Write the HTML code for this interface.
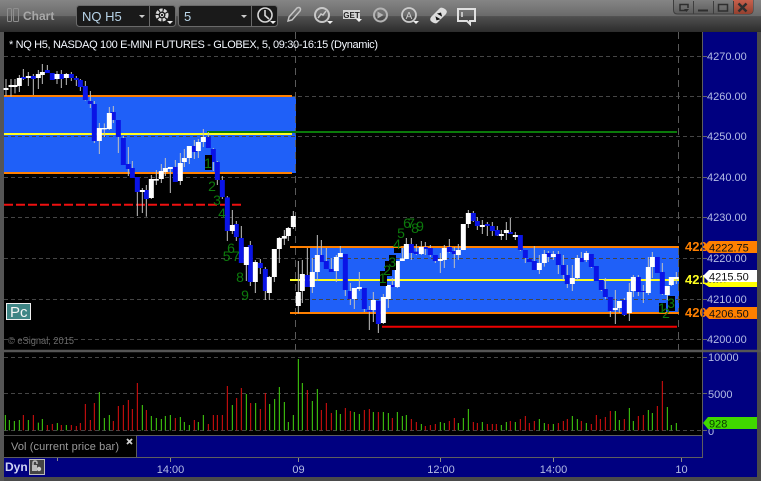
<!DOCTYPE html>
<html><head><meta charset="utf-8"><style>
html,body{margin:0;padding:0;background:#444;width:761px;height:481px;overflow:hidden}
svg{display:block}
text{font-family:"Liberation Sans",sans-serif}
</style></head><body>
<svg width="761" height="481" viewBox="0 0 761 481" xmlns="http://www.w3.org/2000/svg">
<defs>
<linearGradient id="tb" x1="0" y1="0" x2="0" y2="1"><stop offset="0" stop-color="#858585"/><stop offset=".5" stop-color="#6a6a6a"/><stop offset=".51" stop-color="#505050"/><stop offset="1" stop-color="#2c2c2c"/></linearGradient>
<linearGradient id="wb" x1="0" y1="0" x2="0" y2="1"><stop offset="0" stop-color="#7e7e7e"/><stop offset="1" stop-color="#5c5c5c"/></linearGradient>
<linearGradient id="xb" x1="0" y1="0" x2="0" y2="1"><stop offset="0" stop-color="#c8604c"/><stop offset="1" stop-color="#93402f"/></linearGradient>
</defs>
<rect width="761" height="481" fill="#4a4a4a"/>
<rect width="761" height="32" fill="url(#tb)"/>
<rect x="0" y="32" width="4" height="449" fill="#555"/>
<rect x="4" y="32" width="699" height="318" fill="#000"/>
<rect x="4" y="352" width="699" height="83" fill="#000"/>
<rect x="4" y="436" width="132" height="21" fill="#000"/>
<rect x="136" y="436" width="566" height="21" fill="#000080"/>
<rect x="4" y="458" width="699" height="19" fill="#000080"/>
<rect x="703" y="32" width="54" height="445" fill="#000080"/>

<!-- title bar -->
<g fill="none" stroke="#8e8e8e" stroke-width="1"><rect x="7.500" y="8.500" width="4" height="13" rx="1"/><rect x="13.500" y="8.500" width="5" height="13" rx="1"/></g>
<text x="23" y="20" font-size="12" font-weight="bold" fill="#a8a8a8">Chart</text>
<rect x="76.500" y="5.500" width="99" height="21" rx="3" fill="#1a1a1a" stroke="#6a6a6a"/><path d="M149.500 6V26" stroke="#6a6a6a"/>
<rect x="178.500" y="5.500" width="99" height="21" rx="3" fill="#1a1a1a" stroke="#6a6a6a"/><path d="M251.500 6V26" stroke="#6a6a6a"/>
<text x="82" y="21" font-size="13" fill="#b8d4e8">NQ H5</text>
<text x="184" y="21" font-size="13" fill="#b8d4e8">5</text>
<path d="M139 15h6l-3 3zM241 15h6l-3 3z" fill="#ccc"/>
<g fill="none" stroke="#d8d8d8">
<circle cx="162" cy="15" r="5" stroke-width="3" stroke-dasharray="3 1.200"/><circle cx="162" cy="15" r="1.600" stroke-width="1"/>
<circle cx="265" cy="15" r="7" stroke-width="1.600"/><path d="M265 10V15.500L269 19" stroke-width="1.600"/>
<path d="M288 21l1-4 8-9q2-1 3 0t0 3l-8 9z" stroke="#c4c4c4" stroke-width="1.500"/>
<circle cx="322" cy="15" r="7" stroke="#c8c8c8" stroke-width="2"/><path d="M318 18l3-4 2 1 3-4" stroke="#c8c8c8" stroke-width="1.500"/>
<circle cx="380.500" cy="15" r="6.500" stroke="#b4b4b4" stroke-width="2"/>
<circle cx="409" cy="15" r="7" stroke="#cccccc" stroke-width="1.800"/>
<path d="M458 9h17v12h-5v3l-3-3h-9z" stroke="#e0e0e0" stroke-width="2"/><path d="M462 12v5" stroke="#e0e0e0" stroke-width="1.500"/>
</g>
<path d="M167 21h6l-3 3zM270 21h6l-3 3zM327 21h6l-3 3zM356 19h6l-3 3zM413 21h6l-3 3z" fill="#eee"/>
<path d="M377.500 11.500v7l6-3.500z" fill="#b4b4b4"/>
<rect x="343" y="10" width="17" height="9" fill="#d4d4d4"/><text x="351.500" y="18" font-size="8" font-weight="bold" text-anchor="middle" fill="#222">GET</text>
<text x="409" y="19" font-size="10" text-anchor="middle" fill="#cccccc">A</text>
<path d="M431 17l9-9q2-1 5 1t1 5l-9 9q-2 1-5-1t-1-5z" fill="#ddd"/><path d="M436 15l3-3 3 3zM436 18l3 3 3-3z" fill="#111" transform="rotate(30 439 16)"/>

<path d="M673.500 0V10q0 4 4 4H749q4 0 4-4V0" fill="url(#wb)" stroke="#3e3e3e"/>
<path d="M733 0h20v10q0 4-4 4h-16z" fill="url(#xb)"/>
<path d="M693.500 1V14M713.500 1V14M733.500 1V14" stroke="#3e3e3e"/>
<g fill="none" stroke="#2e2e2e" stroke-width="1.500"><path d="M686 10.500H680V4.500H688V8"/><path d="M698 10.500h10" stroke-width="2"/><rect x="718.500" y="4.500" width="9" height="6.500"/><path d="M738.500 3.500l8 8M746.500 3.500l-8 8" stroke-width="2.500"/></g>
<path d="M684 9h5l-2.500 3z" fill="#2e2e2e"/>

<!-- zones -->
<rect x="4" y="96" width="292" height="77" fill="#1f60f8"/>
<rect x="310" y="248" width="369" height="65" fill="#1f60f8"/>
<!-- grid -->
<g stroke="#454545" stroke-dasharray="4 3" fill="none">
<path d="M4 56.500H703M4 96.500H703M4 136.500H703M4 177.500H703M4 217.500H703M4 258.500H703M4 299.500H703M4 339.500H703M4 357.500H703M4 393.500H703M4 430.500H703"/>
</g>
<path d="M295.500 32V350M678.500 32V350" stroke="#5a5a5a" stroke-dasharray="7 5"/>
<!-- lines -->
<path d="M4 96H292M4 173H292M290 247H679M290 313H679" stroke="#ff8000" stroke-width="2"/>
<path d="M4 134H292M290 280H679" stroke="#ffff20" stroke-width="2"/>
<path d="M207 132H677" stroke="#0a7a0a" stroke-width="2"/>
<path d="M4 204.700H241" stroke="#ee1010" stroke-width="2" stroke-dasharray="9 3"/>
<path d="M382 326.700H677" stroke="#ee0000" stroke-width="2"/>

<!-- candles left -->
<g transform="translate(0,60) scale(.33333)" fill="none">
<path stroke="#c0c0c0" stroke-width="3" d="M18 57V108M33 57V110M45 57V100M58 45V96M70 27V60M85 36V78M100 42V105M115 30V87M127 12V72M142 15V39M157 39V60M171 33V72M184 30V84M199 39V75M214 36V63M229 48V78M241 57V93M256 63V122M271 93V144M283 123V249M298 189V282M313 190V231M328 141V210M340 138V189M355 180V279M370 228V315M385 261V348M397 303V354M412 351V468M427 384V459M439 375V470M454 345V417M469 330V375M484 312V369M496 294V348M511 321V399M526 300V366M541 279V375M553 267V321M568 258V312M583 240V297M595 237V294M610 207V261M625 216V264M640 264V333M652 303V375M667 348V417M682 408V543M697 450V522M709 483V543M724 498V609M739 561V663M751 543V678M766 600V699M781 597V642M796 621V720M808 648V720M823 567V666M838 531V609M853 510V555M865 501V543M880 453V507"/>
<path stroke="#0a14e6" stroke-width="15" d="M70 51V57M100 48V57M142 30V39M157 39V60M184 42V57M214 42V54M229 54V60M241 60V81M256 78V120M271 123V132M283 132V243M340 156V180M355 180V231M370 234V315M385 312V327M397 324V354M412 351V396M439 390V417M526 321V366M583 258V276M625 231V264M640 267V306M652 306V360M667 360V411M682 412V513M709 492V531M724 534V609M751 555V666M781 609V624M796 627V693"/>
<path stroke="#fff" stroke-width="15" d="M18 84V90M33 75V81M45 75V81M58 54V78M85 48V54M115 42V54M127 36V45M171 42V57M199 42V54M298 204V243M313 204V208M328 159V207M427 390V396M454 357V414M469 357V362M484 333V357M496 324V336M511 321V327M541 309V363M553 294V306M568 258V294M595 246V273M610 231V246M697 495V513M739 561V615M766 606V666M808 651V699M823 567V651M838 534V567M853 528V536M865 504V528M880 468V501"/>
</g>
<!-- candles middle -->
<g transform="translate(290,200) scale(.33333)" fill="none">
<path stroke="#c0c0c0" stroke-width="3" d="M25 183V340M37 180V309M52 144V261M67 174V279M82 105V243M94 120V186M109 144V207M124 174V216M139 165V246M151 138V171M166 162V288M181 249V315M193 264V327M208 216V273M223 264V336M238 318V390M250 276V366M265 303V399M280 282V372M295 255V324M307 234V261M322 183V264M337 144V183M349 114V177M364 114V180M379 132V165M394 123V165M406 126V165M421 135V171M436 165V189M451 159V219M463 135V204M478 117V159M493 141V204M505 132V180M520 72V150M535 30V84M550 33V66M562 51V90M577 60V102M592 66V108"/>
<path stroke="#0a14e6" stroke-width="15" d="M52 225V261M94 165V186M109 183V207M124 207V216M166 162V270M181 273V297M223 264V327M238 330V335M265 303V372M307 255V261M364 132V159M379 155V162M406 141V147M421 144V165M436 165V183M478 141V156M493 153V162M550 39V63M562 63V78M592 72V78"/>
<path stroke="#fff" stroke-width="15" d="M25 276V318M37 222V273M67 216V261M82 165V216M139 171V213M151 159V171M193 264V297M208 261V267M250 300V330M280 291V369M295 255V297M322 183V261M337 175V183M349 132V177M394 141V162M451 177V183M463 144V180M505 150V165M520 72V150M535 39V72M577 75V81"/>
</g>
<!-- candles right -->
<g transform="translate(490,200) scale(.33333)" fill="none">
<path stroke="#c0c0c0" stroke-width="3" d="M7 66V108M22 78V108M34 90V120M49 66V120M61 54V102M76 96V120M91 105V153M106 150V189M118 177V186M133 138V210M148 165V222M163 150V200M175 153V186M190 153V180M205 153V222M220 165V240M232 195V264M247 195V273M262 165V240M274 156V186M289 153V186M304 162V204M319 198V243M334 240V273M346 234V297M361 291V351M376 270V372M388 303V339M403 294V348M418 249V363M430 225V291M445 225V288M460 255V309M475 171V285M487 156V234M502 171V219M517 189V285M532 258V300M544 231V258M559 216V252"/>
<path stroke="#0a14e6" stroke-width="15" d="M7 78V93M22 90V107M61 96V102M91 105V150M106 150V174M118 177V186M133 183V210M175 159V171M205 162V195M220 195V225M232 225V252M274 174V186M304 162V201M319 198V243M334 240V270M346 267V291M361 291V333M403 300V345M445 231V276M460 273V276M502 171V219M517 216V282"/>
<path stroke="#fff" stroke-width="15" d="M34 102V108M49 90V99M76 105V111M148 189V210M163 162V189M190 162V171M247 234V252M262 174V234M289 159V180M376 324V330M388 303V324M418 276V339M430 231V273M475 201V279M487 171V201M532 258V285M544 231V255M559 231V237"/>
</g>

<!-- count boxes -->
<g fill="#000"><rect x="205" y="155" width="7" height="15"/><rect x="380" y="271" width="7" height="15"/><rect x="385" y="261" width="7" height="15"/><rect x="389" y="255" width="7" height="15"/><rect x="394" y="248" width="7" height="5"/><rect x="668" y="296" width="7" height="15"/><rect x="659" y="303" width="7" height="9"/></g>
<g font-size="14" fill="#0c7a0c" text-anchor="middle">
<text x="208" y="168">1</text><text x="212" y="191">2</text><text x="217" y="205">3</text><text x="222" y="218">4</text><text x="226.700" y="261">5</text><text x="231" y="253">6</text><text x="236" y="261">7</text><text x="240" y="282">8</text><text x="245" y="300">9</text>
<text x="382.700" y="283">1</text><text x="387" y="275">2</text><text x="392.300" y="267">3</text><text x="397" y="249">4</text><text x="401" y="238">5</text><text x="407" y="228">6</text><text x="411" y="228">7</text><text x="415" y="233">8</text><text x="420" y="231">9</text>
<text x="662" y="313">1</text><text x="666" y="318">2</text><text x="671" y="308">3</text>
</g>

<!-- header, badge, copyright -->
<text x="9" y="48" font-size="11" fill="#f4f8ff" textLength="369" lengthAdjust="spacing">* NQ H5, NASDAQ 100 E-MINI FUTURES - GLOBEX, 5, 09:30-16:15 (Dynamic)</text>
<rect x="6.500" y="303.500" width="24" height="16" fill="#3f8585" stroke="#f0f0f0"/>
<text x="10" y="317" font-size="15" fill="#f4f4f4">Pc</text>
<text x="8" y="344" font-size="10" fill="#6a6a6a" textLength="66" lengthAdjust="spacingAndGlyphs">© eSignal, 2015</text>

<!-- chart-side price labels -->
<g font-size="13" font-weight="bold">
<text x="685" y="251" fill="#ff8000">4222.75</text>
<text x="685" y="284" fill="#ffff20">4215.50</text>
<text x="685" y="317" fill="#ff8000">4206.50</text>
</g>

<!-- volume -->
<g transform="translate(0,350) scale(.33333)" fill="none" stroke-width="3">
<path stroke="#44d810" d="M16 195V241M28 210V241M43 213V241M58 210V241M85 210V241M115 218V241M127 207V241M172 219V241M199 225V241M298 126V241M313 204V241M328 195V241M427 165V241M454 198V241M469 204V241M484 207V241M496 198V241M511 195V241M541 201V241M553 216V241M568 225V241M595 216V241M610 195V241M697 165V241M739 132V241M767 159V241M809 162V241M824 147V241M838 111V241M853 156V241M865 216V241M880 195V241M895 27V241M907 99V241M937 153V241M952 117V241M1009 180V241M1021 192V241M1063 186V241M1078 192V241M1120 186V241"/>
<path stroke="#e01010" d="M70 195V241M100 195V241M142 225V241M157 222V241M184 225V241M214 225V241M229 228V241M241 219V241M256 162V241M271 210V241M283 159V241M340 213V241M355 168V241M370 165V241M385 150V241M397 177V241M412 99V241M439 180V241M526 204V241M583 210V241M625 222V241M640 195V241M652 195V241M667 195V241M682 108V241M710 144V241M724 114V241M752 159V241M781 177V241M796 129V241M922 120V241M964 180V241M979 159V241M994 189V241M1036 174V241M1051 183V241M1093 180V241M1108 177V241M1135 186V241"/>
</g>
<g transform="translate(380,350) scale(.33333)" fill="none" stroke-width="3">
<path stroke="#44d810" d="M10 186V241M25 189V241M52 186V241M67 198V241M79 195V241M124 222V241M181 216V241M193 219V241M235 219V241M250 204V241M265 177V241M307 216V241M364 225V241M379 216V241M406 216V241M478 207V241M493 219V241M520 222V241M577 198V241M592 207V241M619 219V241M706 183V241M718 210V241M748 174V241M760 213V241M805 180V241M817 189V241M862 171V241M874 225V241M889 219V241"/>
<path stroke="#e01010" d="M37 204V241M94 207V241M109 216V241M136 228V241M151 225V241M166 222V241M208 213V241M223 204V241M280 216V241M292 219V241M322 222V241M337 222V241M349 222V241M391 213V241M421 207V241M436 198V241M448 219V241M463 213V241M505 222V241M535 219V241M550 213V241M562 207V241M604 213V241M634 222V241M649 195V241M661 207V241M676 201V241M691 183V241M733 207V241M775 198V241M790 195V241M832 168V241M847 93V241"/>
</g>

<!-- pane borders -->
<path d="M0 351H761" stroke="#555" stroke-width="2.500"/>
<path d="M136 435.500H703M4 457.500H703M136.500 436V457M702.500 32V458" stroke="#5e5e5e"/>
<path d="M57.500 458v3M170.500 458v4M298.500 458v4M440.500 458v4M553.500 458v4M681.500 458v4" stroke="#8a8a8a"/>
<path d="M703 56.500h4M703 96.500h4M703 136.500h4M703 177.500h4M703 217.500h4M703 258.500h4M703 299.500h4M703 339.500h4M703 357.500h4M703 393.500h4M703 430.500h4" stroke="#666"/>

<!-- axis labels -->
<g font-size="11" fill="#b4bce4">
<text x="707" y="60">4270.00</text><text x="707" y="100">4260.00</text><text x="707" y="140">4250.00</text><text x="707" y="181">4240.00</text><text x="707" y="221">4230.00</text><text x="707" y="262">4220.00</text><text x="707" y="303">4210.00</text><text x="707" y="343">4200.00</text>
<text x="708" y="361">10000</text><text x="708" y="398">5000</text><text x="708" y="435">0</text>
<text x="170.500" y="473" text-anchor="middle">14:00</text><text x="298.500" y="473" text-anchor="middle">09</text><text x="441" y="473" text-anchor="middle">12:00</text><text x="553.500" y="473" text-anchor="middle">14:00</text><text x="681.500" y="473" text-anchor="middle">10</text>
</g>
<!-- tags -->
<path d="M703 247L709 241H757V253H709z" fill="#ff8000"/>
<path d="M703 283L709 287H757V281z" fill="#ffff00"/>
<path d="M703 276L709 270H757V282H709z" fill="#fff"/>
<path d="M703 313L709 307H757V319H709z" fill="#ff8000"/>
<path d="M703 423L708 417H757V429H708z" fill="#40d800"/>
<g font-size="11" fill="#101010"><text x="709" y="251.500">4222.75</text><text x="709" y="280.500">4215.50</text><text x="709" y="317.500">4206.50</text><text x="709" y="427.500" fill="#0b3a00">928</text></g>

<!-- lower labels -->
<text x="11" y="450" font-size="11" fill="#9a9a9a" textLength="108" lengthAdjust="spacing">Vol (current price bar)</text>
<path d="M127 439l5 5M132 439l-5 5" stroke="#d0d0d0" stroke-width="1.800"/>
<text x="5" y="471" font-size="12" font-weight="bold" fill="#d0d4f4">Dyn</text>
<rect x="29.500" y="459.500" width="15" height="15" fill="#444" stroke="#bbb"/>
<path d="M33 465v-2q0-2 2-2t2 2v1" fill="none" stroke="#bbb" stroke-width="1.500"/><rect x="32" y="465" width="5" height="6" fill="#bbb"/><circle cx="39" cy="469" r="2.200" fill="#ccc"/>
</svg>
</body></html>
